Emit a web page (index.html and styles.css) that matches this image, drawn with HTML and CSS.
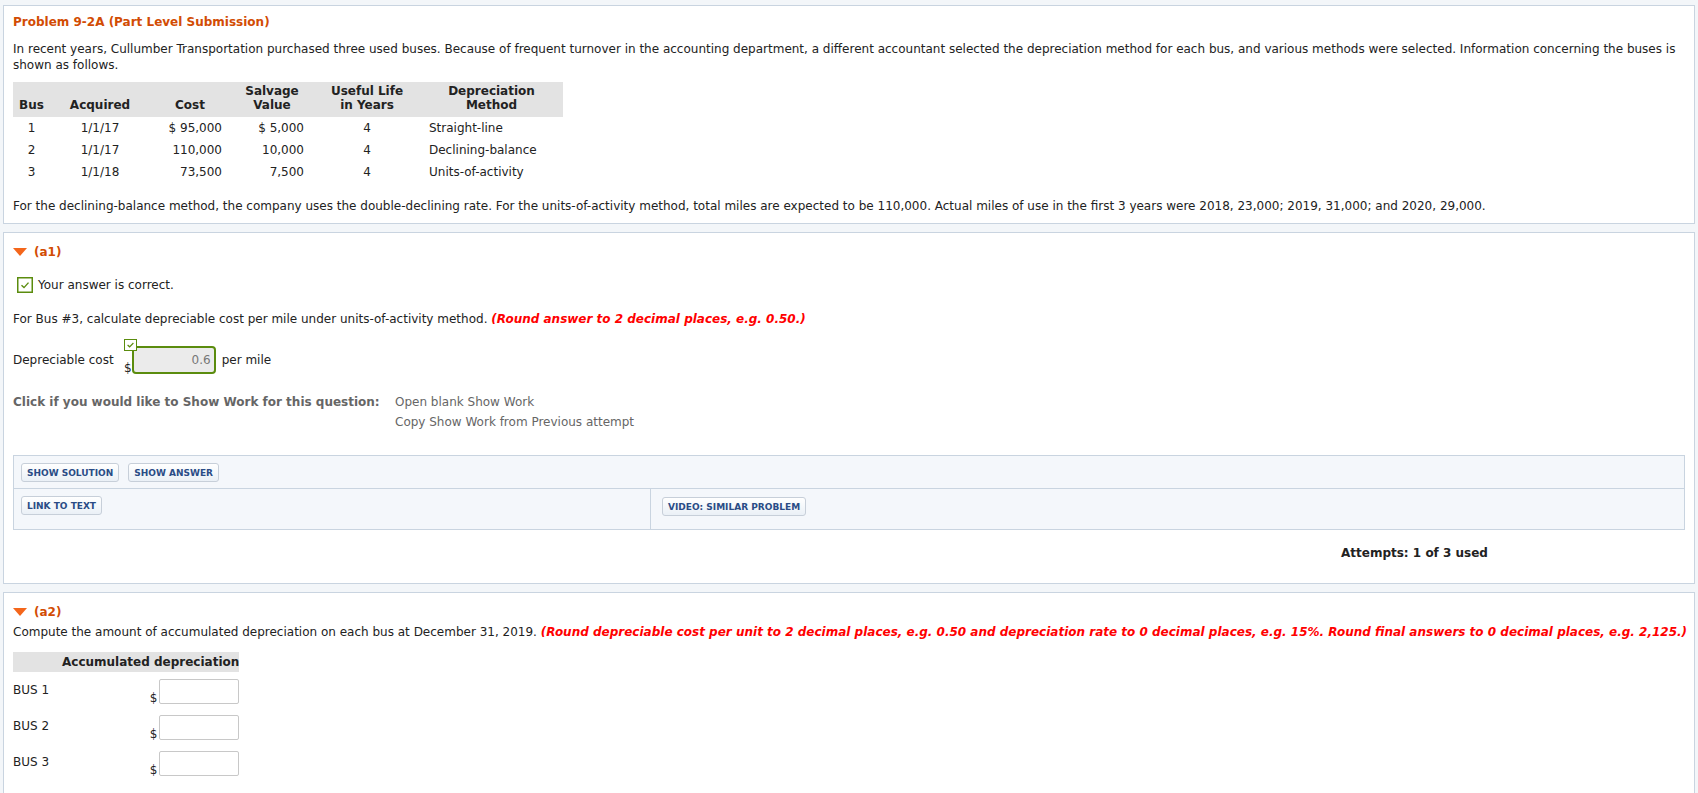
FILE: index.html
```html
<!DOCTYPE html>
<html lang="en">
<head>
    <meta charset="UTF-8">
    <meta name="viewport" content="width=device-width, initial-scale=1.0">
    <title>Problem 9-2A</title>
    <link rel="stylesheet" href="styles.css">
</head>
<body>
    <!-- problem statement -->
    <div class="panel intro-panel">
        <h2 class="title">Problem 9-2A (Part Level Submission)</h2>
        <p class="intro">In recent years, Cullumber Transportation purchased three used buses. Because of frequent turnover in the accounting department, a different accountant selected the depreciation method for each bus, and various methods were selected. Information concerning the buses is shown as follows.</p>

        <table class="bus-table">
            <colgroup>
                <col style="width: 37px">
                <col style="width: 100px">
                <col style="width: 80px">
                <col style="width: 84px">
                <col style="width: 106px">
                <col style="width: 143px">
            </colgroup>
            <tr>
                <th>Bus</th>
                <th>Acquired</th>
                <th>Cost</th>
                <th>Salvage<br>Value</th>
                <th>Useful Life<br>in Years</th>
                <th>Depreciation<br>Method</th>
            </tr>
            <tr>
                <td class="c-center">1</td>
                <td class="c-center">1/1/17</td>
                <td class="c-cost">$ 95,000</td>
                <td class="c-salv">$ 5,000</td>
                <td class="c-center">4</td>
                <td class="c-meth">Straight-line</td>
            </tr>
            <tr>
                <td class="c-center">2</td>
                <td class="c-center">1/1/17</td>
                <td class="c-cost">110,000</td>
                <td class="c-salv">10,000</td>
                <td class="c-center">4</td>
                <td class="c-meth">Declining-balance</td>
            </tr>
            <tr>
                <td class="c-center">3</td>
                <td class="c-center">1/1/18</td>
                <td class="c-cost">73,500</td>
                <td class="c-salv">7,500</td>
                <td class="c-center">4</td>
                <td class="c-meth">Units-of-activity</td>
            </tr>
        </table>

        <p class="outro">For the declining-balance method, the company uses the double-declining rate. For the units-of-activity method, total miles are expected to be 110,000. Actual miles of use in the first 3 years were 2018, 23,000; 2019, 31,000; and 2020, 29,000.</p>
    </div>

    <!-- part a1 -->
    <div class="panel part">
        <div class="part-head"><span class="arrow"></span>(a1)</div>

        <div class="correct">
            <svg class="check" width="16" height="16" viewBox="0 0 16 16">
                <rect x="0.75" y="0.75" width="14.5" height="14.5" fill="#fff" stroke="#5b8c0e" stroke-width="1.5"/>
                <polyline points="4.5,8.3 7,10.6 11.5,5.6" fill="none" stroke="#5b8c0e" stroke-width="1.4"/>
            </svg>
            Your answer is correct.
        </div>

        <p class="question">For Bus #3, calculate depreciable cost per mile under units-of-activity method. <span class="hint">(Round answer to 2 decimal places, e.g. 0.50.)</span></p>

        <div class="answer-row">
            <span class="answer-label">Depreciable cost</span>
            <span class="dollar">$</span>
            <span class="field">
                <svg class="mini-check" width="13" height="12" viewBox="0 0 13 12">
                    <rect x="0.5" y="0.5" width="12" height="11" fill="#fff" stroke="#5b8c0e" stroke-width="1"/>
                    <polyline points="3.6,6 5.6,7.8 9.4,4" fill="none" stroke="#5b8c0e" stroke-width="1.2"/>
                </svg>
                <input type="text" class="done" value="0.6" disabled>
            </span>
            <span class="unit">per mile</span>
        </div>

        <div class="show-work">
            <div class="sw-label">Click if you would like to Show Work for this question:</div>
            <div class="sw-links">
                <div>Open blank Show Work</div>
                <div>Copy Show Work from Previous attempt</div>
            </div>
        </div>

        <div class="tools">
            <div class="tools-row">
                <button class="tool">SHOW SOLUTION</button>
                <button class="tool">SHOW ANSWER</button>
            </div>
            <div class="tools-grid">
                <div class="tools-cell">
                    <button class="tool">LINK TO TEXT</button>
                </div>
                <div class="tools-cell video">
                    <button class="tool">VIDEO: SIMILAR PROBLEM</button>
                </div>
            </div>
        </div>

        <div class="attempts">Attempts: 1 of 3 used</div>
    </div>

    <!-- part a2 -->
    <div class="panel part last">
        <div class="part-head"><span class="arrow"></span>(a2)</div>
        <p class="question tight">Compute the amount of accumulated depreciation on each bus at December 31, 2019. <span class="hint">(Round depreciable cost per unit to 2 decimal places, e.g. 0.50 and depreciation rate to 0 decimal places, e.g. 15%. Round final answers to 0 decimal places, e.g. 2,125.)</span></p>

        <table class="acc-table">
            <tr>
                <th class="acc-name"></th>
                <th class="acc-val">Accumulated depreciation</th>
            </tr>
            <tr>
                <td class="acc-name">BUS 1</td>
                <td class="acc-val"><span class="cell-in">$<input type="text"></span></td>
            </tr>
            <tr>
                <td class="acc-name">BUS 2</td>
                <td class="acc-val"><span class="cell-in">$<input type="text"></span></td>
            </tr>
            <tr>
                <td class="acc-name">BUS 3</td>
                <td class="acc-val"><span class="cell-in">$<input type="text"></span></td>
            </tr>
        </table>
    </div>
</body>
</html>
```

FILE: styles.css
```css
body {
    font-family: "DejaVu Sans", Verdana, sans-serif;
    font-size: 12px;
    line-height: 16px;
    color: #222;
    background-color: #f3f6f9;
    margin: 0;
    padding: 5px 3px 0;
}
p {
    margin: 0;
}
.panel {
    background-color: #fff;
    border: 1px solid #c9d4e0;
    padding: 8px 9px 9px;
}
.part {
    margin-top: 8px;
    padding: 11px 9px 22px;
}
.title {
    margin: 0;
    font-size: 12px;
    line-height: 16px;
    color: #d24c04;
}
.intro {
    margin-top: 11px;
}

/* bus data table */
.bus-table {
    border-collapse: collapse;
    table-layout: fixed;
    margin-top: 9px;
    width: 550px;
}
.bus-table th {
    background-color: #e3e3e3;
    line-height: 14px;
    padding: 2px 0 5px;
    vertical-align: bottom;
    text-align: center;
}
.bus-table td {
    padding: 3px 0;
}
.c-center { text-align: center; }
.c-cost { text-align: right; padding-right: 8px !important; }
.c-salv { text-align: right; padding-right: 10px !important; }
.c-meth { text-align: left; padding-left: 9px !important; }

.outro {
    margin-top: 15px;
}

/* parts */
.part-head {
    font-size: 12px;
    font-weight: bold;
    color: #d24c04;
    display: flex;
    align-items: center;
}
.arrow {
    width: 0;
    height: 0;
    border-left: 7px solid transparent;
    border-right: 7px solid transparent;
    border-top: 8px solid #f4661b;
    margin: 0 7px 0 0;
}
.correct {
    display: flex;
    align-items: center;
    gap: 5px;
    margin: 17px 0 0 4px;
}
.question {
    margin-top: 18px;
}
.question.tight {
    margin-top: 4px;
    white-space: nowrap;
}
.hint {
    color: #f00;
    font-weight: bold;
    font-style: italic;
}

.answer-row {
    display: flex;
    align-items: center;
    margin-top: 19px;
}
.answer-label {
    width: 111px;
}
.dollar {
    align-self: flex-end;
    line-height: 12px;
}
.field {
    position: relative;
}
.mini-check {
    position: absolute;
    left: -8px;
    top: -7px;
}
input {
    font-family: inherit;
    font-size: 12px;
}
input.done {
    width: 84px;
    height: 28px;
    box-sizing: border-box;
    border: 2px solid #5b8c0e;
    border-radius: 4px;
    background-color: #ebebeb;
    color: #777;
    text-align: right;
    padding: 0 3px;
    display: block;
}
.unit {
    margin-left: 6px;
}

.show-work {
    display: flex;
    margin-top: 18px;
    line-height: 20px;
    color: #666;
}
.sw-label {
    width: 382px;
    font-weight: bold;
}

/* solution tools */
.tools {
    margin-top: 23px;
    border: 1px solid #c9d4e0;
    background-color: #f4f7fb;
}
.tools-row {
    display: flex;
    gap: 9px;
    padding: 7px 7px 6px;
    border-bottom: 1px solid #c9d4e0;
}
.tools-grid {
    display: grid;
    grid-template-columns: 636px 1fr;
    height: 40px;
}
.tools-cell {
    padding: 7px 7px 0;
}
.tools-cell.video {
    border-left: 1px solid #c9d4e0;
    padding: 8px 11px 0;
}
.tool {
    font-family: "DejaVu Sans", Verdana, sans-serif;
    font-size: 9px;
    font-weight: bold;
    color: #2a4c86;
    height: 19px;
    padding: 0 5px;
    border: 1px solid #c7cfd9;
    border-radius: 3px;
    background: linear-gradient(#ffffff, #eaf0f6);
    cursor: pointer;
}

.attempts {
    margin: 15px 0 0 1328px;
    font-weight: bold;
}

/* accumulated depreciation */
.acc-table {
    border-collapse: collapse;
    margin-top: 12px;
}
.acc-table th {
    background-color: #e3e3e3;
    padding: 2px 0;
    text-align: right;
}
.acc-table td {
    height: 36px;
    padding: 0;
    vertical-align: top;
    box-sizing: border-box;
}
.acc-name {
    width: 49px;
}
td.acc-name {
    padding-top: 10px;
}
td.acc-val {
    padding-top: 7px;
}
.cell-in {
    display: flex;
    justify-content: flex-end;
    align-items: flex-end;
    gap: 2px;
    line-height: 12px;
}
.cell-in input {
    width: 80px;
    height: 25px;
    box-sizing: border-box;
    border: 1px solid #c8c8c8;
    border-radius: 2px;
    background-color: #fff;
}
.last {
    min-height: 184px;
}
```
